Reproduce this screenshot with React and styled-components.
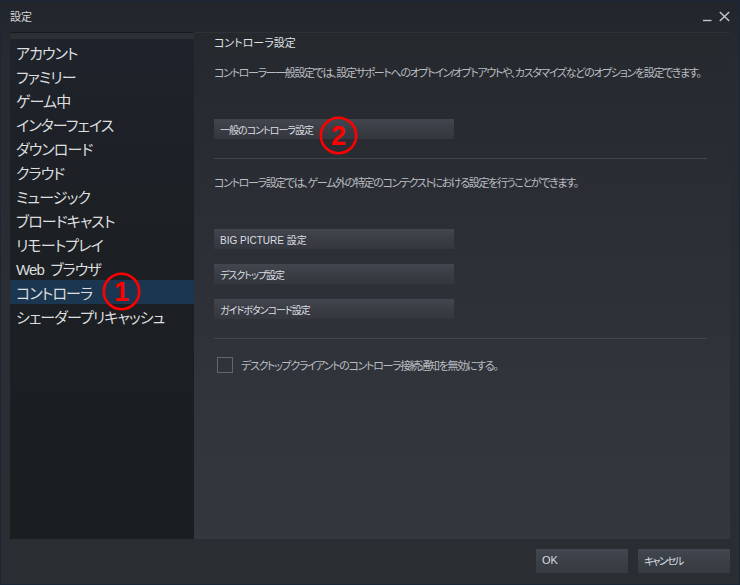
import React from "react";
import styled, { createGlobalStyle } from "styled-components";

const GlobalStyle = createGlobalStyle`
  html, body { margin: 0; padding: 0; background: #2a2d32; }
  * { box-sizing: border-box; }
`;

const FONT = `"Liberation Sans", "Noto Sans CJK JP", sans-serif`;

const Window = styled.div`
  position: relative;
  width: 740px;
  height: 585px;
  border: 1px solid #1b2636;
  background: linear-gradient(to bottom, #22262c 0px, #272a30 60px, #2a2d32 300px, #2a2d32 100%);
  font-family: ${FONT};
  font-feature-settings: "palt";
  display: flex;
  flex-direction: column;
  overflow: hidden;
`;

const TitleBar = styled.div`
  height: 31px;
  flex: none;
  display: flex;
  align-items: center;
  padding: 0 9px 0 9px;
  color: #d4d7da;
  font-size: 11px;
`;

const TitleText = styled.div`
  flex: 1;
  margin-top: -1px;
`;

const WinControls = styled.div`
  display: flex;
  align-items: center;
  gap: 7px;
`;

const WinButton = styled.svg`
  display: block;
  width: ${(p) => p.$w}px;
  height: 12px;
  stroke: #c4c8cc;
  fill: none;
`;

const Body = styled.div`
  display: flex;
  height: 507px;
  flex: none;
  padding: 0 9px;
`;

const Sidebar = styled.div`
  width: 184px;
  flex: none;
  display: flex;
  flex-direction: column;
`;

const SidebarTop = styled.div`
  height: 7px;
  flex: none;
  background: #2c2f34;
  border-top: 1px solid #17191c;
`;

const SidebarList = styled.div`
  flex: 1;
  padding-top: 1px;
  background: linear-gradient(to bottom, #1f232b 0%, #1c1f23 40%, #1b1e21 100%);
`;

const NavItem = styled.div`
  height: 24px;
  display: flex;
  align-items: center;
  padding-left: 6px;
  font-size: 15px;
  color: #dcdedf;
  letter-spacing: -0.9px;
  white-space: pre;
  background: ${(p) => (p.$active ? "#1b3650" : "transparent")};
`;

const Panel = styled.div`
  flex: 1;
  display: flex;
  flex-direction: column;
  padding-left: 20px;
  background: linear-gradient(to bottom, #25282d 0%, #2b2e34 35%, #31353c 75%, #33373e 100%);
  border-top: 1px solid #2e3136;
`;

const Heading = styled.div`
  margin-top: 3px;
  line-height: 14px;
  font-size: 11px;
  color: #dfe1e3;
`;

const Desc = styled.div`
  margin-top: ${(p) => p.$mt}px;
  line-height: 14px;
  font-size: 11px;
  letter-spacing: -1.35px;
  white-space: nowrap;
  color: #b9bdc1;
`;

const Button = styled.div`
  margin-top: ${(p) => p.$mt}px;
  width: 240px;
  height: 20px;
  flex: none;
  display: flex;
  align-items: center;
  padding-left: 6px;
  font-size: 10px;
  letter-spacing: ${(p) => (p.$latin ? "0px" : "-1px")};
  color: #dcdfe2;
  background: linear-gradient(to bottom, #42464e 0%, #3a3d44 50%, #34373d 100%);
`;

const Separator = styled.div`
  margin-top: ${(p) => p.$mt}px;
  width: 493px;
  height: 1px;
  flex: none;
  background: #42464d;
`;

const CheckRow = styled.label`
  margin-top: 18px;
  display: flex;
  align-items: center;
  gap: 8px;
  padding-left: 3px;
  font-size: 11px;
  letter-spacing: -1.35px;
  white-space: nowrap;
  color: #b9bdc1;
`;

const CheckBox = styled.span`
  width: 16px;
  height: 16px;
  flex: none;
  border: 1px solid #63676d;
  background: transparent;
`;

const Footer = styled.div`
  flex: 1;
  display: flex;
  justify-content: flex-end;
  align-items: flex-start;
  gap: 10px;
  padding: 10px 9px 0 0;
`;

const FooterButton = styled.div`
  width: 92px;
  height: 24px;
  display: flex;
  align-items: center;
  padding: 0 0 2px 6px;
  font-size: ${(p) => (p.$latin ? "11px" : "10.5px")};
  letter-spacing: ${(p) => (p.$latin ? "0px" : "-1.8px")};
  color: #d6dbe0;
  background: linear-gradient(to bottom, #42464e 0%, #3b3f46 50%, #363a41 100%);
`;

const Marker = styled.svg`
  position: absolute;
  left: ${(p) => p.$x}px;
  top: ${(p) => p.$y}px;
  width: 39px;
  height: 39px;
  overflow: visible;
`;

const MarkerDigit = styled.text`
  font-family: "Liberation Sans", Arial, sans-serif;
  font-weight: bold;
  font-size: 27px;
  fill: #ff0000;
`;

function Annotation({ x, y, n }) {
  return (
    <Marker $x={x} $y={y} viewBox="0 0 39 39">
      <circle cx="19.5" cy="19.5" r="17.7" fill="none" stroke="#ff0000" strokeWidth="2.6" />
      <MarkerDigit x="19.5" y="29" textAnchor="middle">
        {n}
      </MarkerDigit>
    </Marker>
  );
}

const navItems = [
  "アカウント",
  "ファミリー",
  "ゲーム中",
  "インターフェイス",
  "ダウンロード",
  "クラウド",
  "ミュージック",
  "ブロードキャスト",
  "リモートプレイ",
  "Web  ブラウザ",
  "コントローラ",
  "シェーダープリキャッシュ",
];

export default function App() {
  return (
    <>
      <GlobalStyle />
      <Window>
        <TitleBar>
          <TitleText>設定</TitleText>
          <WinControls>
            <WinButton $w={9} viewBox="0 0 9 12">
              <line x1="0" y1="9.5" x2="8.5" y2="9.5" strokeWidth="1.4" />
            </WinButton>
            <WinButton $w={11} viewBox="0 0 11 12">
              <line x1="0.8" y1="1" x2="10.2" y2="10" strokeWidth="1.4" />
              <line x1="10.2" y1="1" x2="0.8" y2="10" strokeWidth="1.4" />
            </WinButton>
          </WinControls>
        </TitleBar>
        <Body>
          <Sidebar>
            <SidebarTop />
            <SidebarList>
              {navItems.map((item) => (
                <NavItem key={item} $active={item === "コントローラ"}>
                  {item}
                </NavItem>
              ))}
            </SidebarList>
          </Sidebar>
          <Panel>
            <Heading>コントローラ設定</Heading>
            <Desc $mt={16}>
              コントローラー一般設定では、設定サポートへのオプトイン/オプトアウトや、カスタマイズなどのオプションを設定できます。
            </Desc>
            <Button $mt={39}>一般のコントローラ設定</Button>
            <Separator $mt={19} />
            <Desc $mt={17}>
              コントローラ設定では、ゲーム外の特定のコンテクストにおける設定を行うことができます。
            </Desc>
            <Button $mt={39} $latin>BIG PICTURE 設定</Button>
            <Button $mt={15}>デスクトップ設定</Button>
            <Button $mt={15}>ガイドボタンコード設定</Button>
            <Separator $mt={19} />
            <CheckRow>
              <CheckBox />
              デスクトップクライアントのコントローラ接続通知を無効にする。
            </CheckRow>
          </Panel>
        </Body>
        <Footer>
          <FooterButton $latin>OK</FooterButton>
          <FooterButton>キャンセル</FooterButton>
        </Footer>
        <Annotation x={101} y={271} n="1" />
        <Annotation x={318} y={115} n="2" />
      </Window>
    </>
  );
}
